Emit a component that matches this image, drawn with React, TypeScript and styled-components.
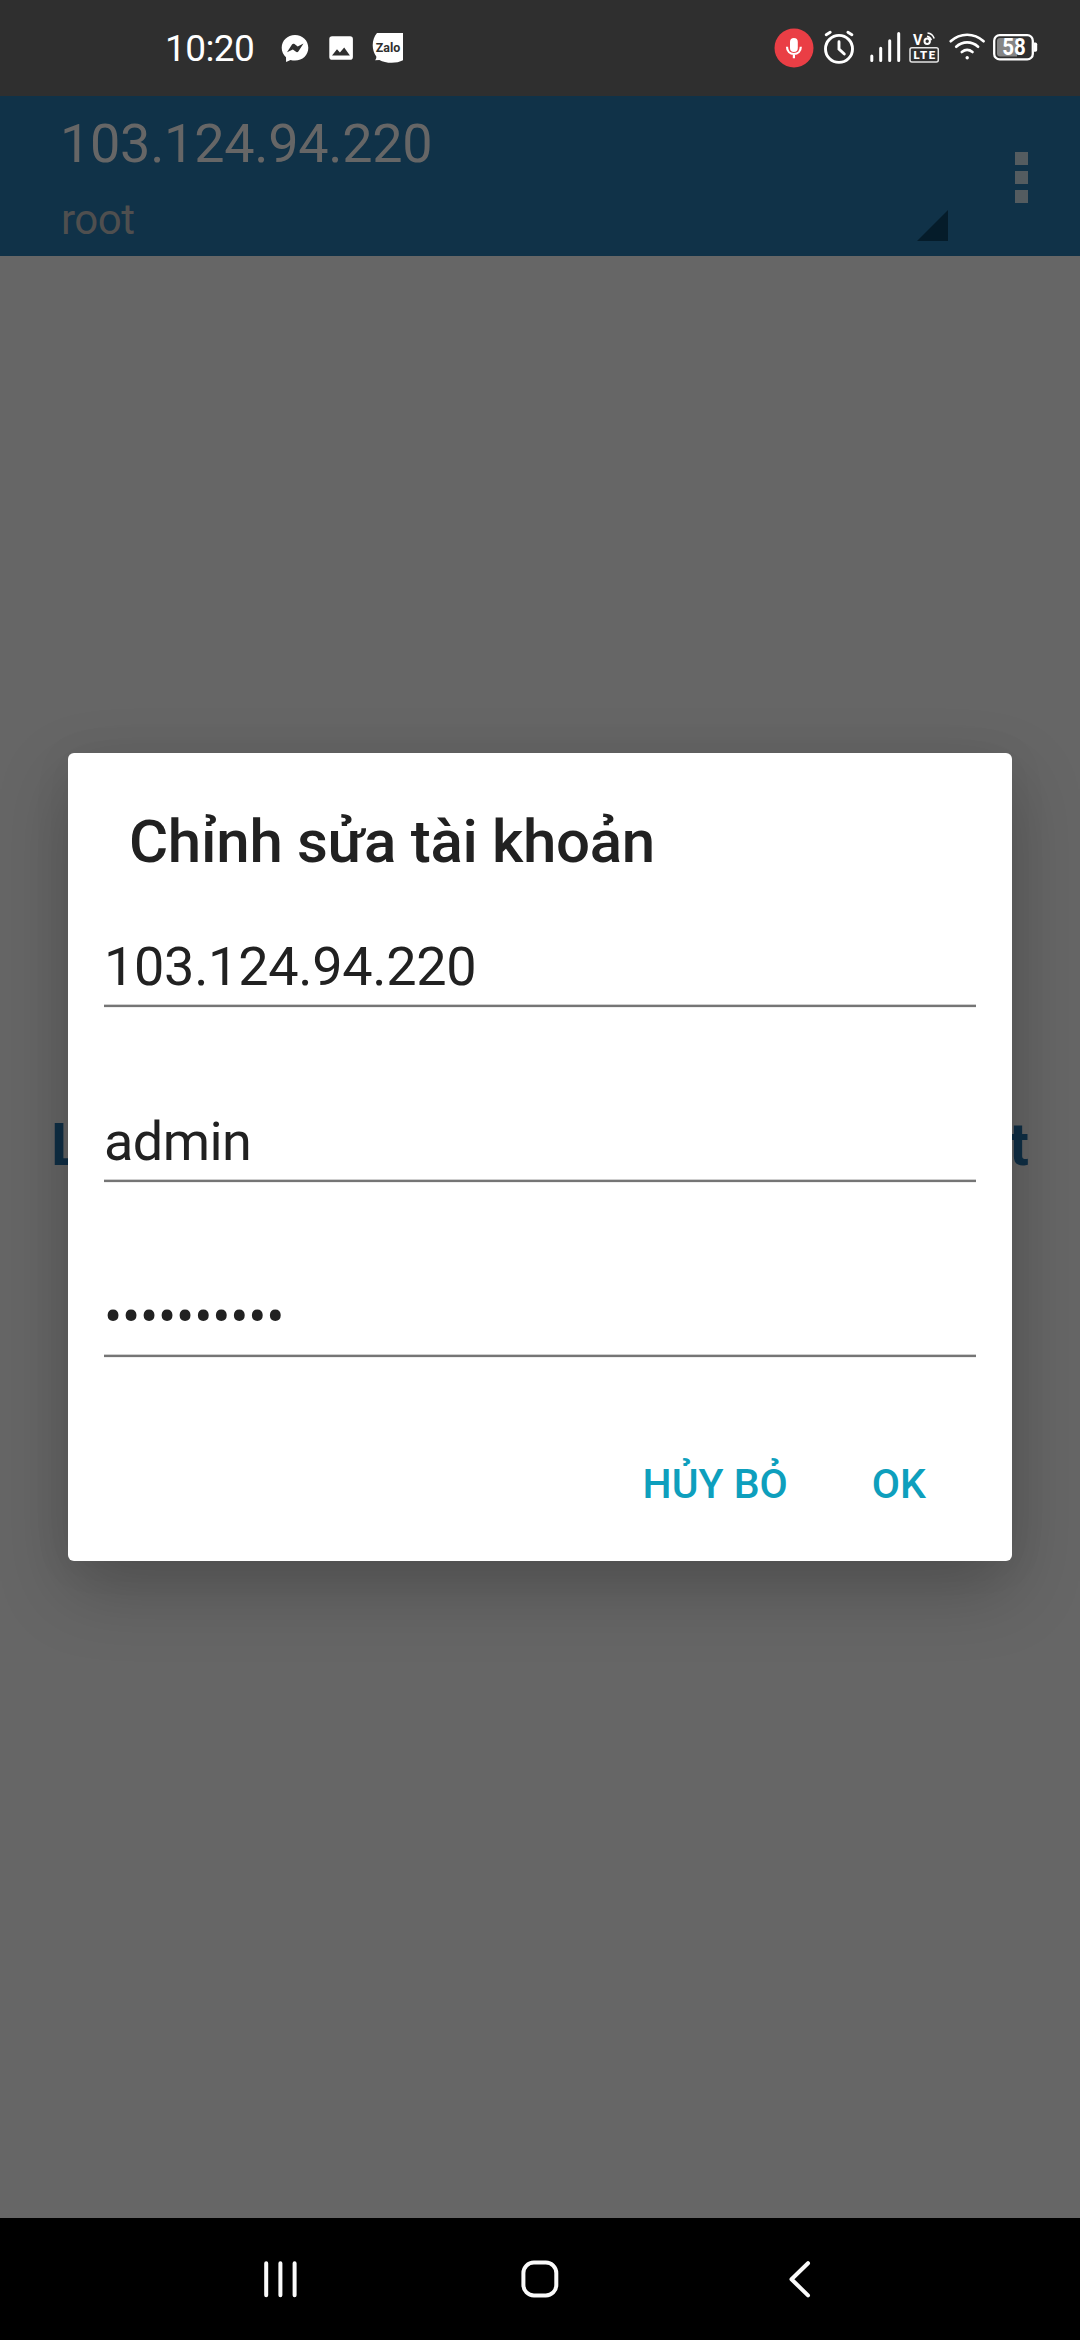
import React from "react";
import styled, { createGlobalStyle } from "styled-components";

const GlobalStyle = createGlobalStyle`
  * { box-sizing: border-box; }
  html, body { margin: 0; padding: 0; background: #666666; }
  body { font-family: Roboto, "Liberation Sans", sans-serif; }
`;

const Screen = styled.div`
  position: relative;
  display: flex;
  flex-direction: column;
  width: 1080px;
  height: 2340px;
  overflow: hidden;
  background: #666666;
`;

const StatusBar = styled.header`
  display: flex;
  justify-content: space-between;
  height: 96px;
  padding: 0 40px 0 165px;
  background: #2f2f2f;
  color: #ffffff;
`;

const StatusGroup = styled.div`
  display: flex;
  align-items: center;
`;

const Clock = styled.time`
  width: 115px;
  font-size: 37px;
  line-height: 44px;
  letter-spacing: -0.6px;
  padding-top: 2px;
`;

const Glyph = styled.svg<{ $gap?: number }>`
  display: block;
  flex: none;
  margin-left: ${(p) => p.$gap ?? 0}px;
`;

const AppBar = styled.div`
  display: flex;
  height: 160px;
  background: #103248;
`;

const AccountPicker = styled.div`
  display: flex;
  align-items: flex-end;
  justify-content: space-between;
  width: 948px;
  padding: 0 0 15px 60px;
`;

const AccountText = styled.div`
  display: flex;
  flex-direction: column;
  align-self: flex-start;
  padding-top: 16px;
`;

const Host = styled.span`
  font-size: 54px;
  line-height: 64px;
  letter-spacing: -0.3px;
  color: #666666;
`;

const User = styled.span`
  margin-top: 19px;
  padding-left: 1px;
  font-size: 42px;
  line-height: 50px;
  letter-spacing: -0.5px;
  color: #4f4f4f;
`;

const Corner = styled.div`
  width: 31px;
  height: 31px;
  background: #051c2a;
  clip-path: polygon(100% 0, 100% 100%, 0 100%);
`;

const Overflow = styled.button`
  display: flex;
  flex-direction: column;
  align-items: center;
  gap: 6px;
  flex: 1;
  padding: 56px 0 0 14px;
  border: 0;
  background: none;
`;

const OverflowDot = styled.i`
  width: 13px;
  height: 13px;
  background: #545c60;
`;

const Content = styled.main`
  display: flex;
  flex: 1;
  align-items: flex-start;
  justify-content: space-between;
  padding: 854px 51px 0 51px;
`;

const Hint = styled.span`
  font-size: 59px;
  font-weight: 700;
  line-height: 70px;
  color: #102f46;
`;

const Dialog = styled.section`
  position: absolute;
  left: 68px;
  top: 753px;
  display: flex;
  flex-direction: column;
  width: 944px;
  height: 808px;
  padding: 0 36px;
  border-radius: 6px;
  background: #ffffff;
  box-shadow: 0 28px 72px rgba(0, 0, 0, 0.22), 0 4px 40px rgba(0, 0, 0, 0.06);
`;

const DialogTitle = styled.h1`
  margin: 54px 0 0 25px;
  font-size: 60px;
  font-weight: 500;
  line-height: 70px;
  letter-spacing: -0.3px;
  color: #212121;
`;

const Fields = styled.div`
  display: flex;
  flex-direction: column;
  gap: 80px;
  margin-top: 36px;
`;

const Field = styled.div<{ $spacing?: number }>`
  display: flex;
  align-items: flex-start;
  height: 95px;
  font-size: 54px;
  line-height: 108px;
  letter-spacing: ${(p) => p.$spacing ?? -0.3}px;
  color: #212121;
  background: linear-gradient(#cfcfcf 0 1px, #757575 1px 3px, #efefef 3px) bottom / 100% 4px no-repeat;
`;

const Actions = styled.footer`
  display: flex;
  justify-content: flex-end;
  gap: 84px;
  margin-top: 101px;
  padding-right: 50px;
`;

const Action = styled.button`
  padding: 0;
  border: 0;
  background: none;
  font: 500 41px/50px Roboto, "Liberation Sans", sans-serif;
  color: #0e9fbd;
`;

const NavBar = styled.nav`
  display: flex;
  align-items: center;
  justify-content: space-between;
  height: 122px;
  padding: 0 260px 0 260px;
  background: #000000;
`;

const MessengerIcon = () => (
  <Glyph width="30" height="30" viewBox="280 33 30 30">
    <path fill="#fff" d="M295 35c-7.600 0-13.300 5.500-13.300 12.800 0 3.900 1.600 7.200 4.300 9.500l.1 4.700 4.400-2c1.400.4 2.900.6 4.500.6 7.600 0 13.300-5.500 13.300-12.800S302.600 35 295 35z" />
    <path fill="#2f2f2f" d="M287 52.200l5-7.700c.6-.9 1.700-1.100 2.500-.5l3.200 2.400 5.800-2.900-5 7.800c-.6.9-1.700 1.100-2.500.5l-3.100-2.400z" />
  </Glyph>
);

const PictureIcon = () => (
  <Glyph $gap={18} width="26" height="26" viewBox="328 35 26 26">
    <rect x="329.300" y="36.300" width="23.600" height="23.400" rx="2.800" fill="#fff" />
    <path fill="#2f2f2f" d="M332 55.500l5-6.200 2.900 3.200 4.300-5 5.700 8z" />
  </Glyph>
);

const ZaloIcon = () => (
  <Glyph $gap={18} width="32" height="32" viewBox="372 31 32 32">
    <path fill="#fff" d="M377 32h26v27.300c-3.200 1.700-7.200 2.500-11.300 2.500-4.800 0-9-1.100-12.300-2.900l-4.400.3c1-1.100 1.500-2.400 1.300-3.800-2.300-3.200-3.600-7-3.600-11.200 0-4.800 1.600-9 4.300-12.200z" />
    <text x="375.700" y="51" fontFamily="Roboto, sans-serif" fontSize="12.500" fontWeight="700" textLength="24.500" lengthAdjust="spacingAndGlyphs" fill="#2f2f2f">Zalo</text>
  </Glyph>
);

const MicIcon = () => (
  <Glyph width="40" height="40" viewBox="774.300 27.300 40 40">
    <circle cx="794.300" cy="47.300" r="19.500" fill="#ea3e45" />
    <rect x="790.300" y="37.300" width="7.800" height="14" rx="3.900" fill="#fff" />
    <path d="M787.300 46c0 4.500 3 7.300 6.900 7.300s6.900-2.800 6.900-7.300M794.200 53v4.500" fill="none" stroke="#fff" strokeWidth="2.200" />
  </Glyph>
);

const AlarmIcon = () => (
  <Glyph $gap={9} width="32" height="36" viewBox="823.300 29.800 32 36">
    <g fill="none" stroke="#fff" strokeWidth="2.900" strokeLinecap="round">
      <circle cx="839.300" cy="48.700" r="13.500" />
      <path d="M839.300 41.500v7.300l5.300 5M826.500 34.600l4-2.500M852.200 34.600l-4-2.500" />
    </g>
  </Glyph>
);

const SignalIcon = () => (
  <Glyph $gap={14} width="34" height="34" viewBox="869 31 34 34">
    <path d="M871.800 56v4.500M880.700 48.300v12.200M889.700 40.800v19.700M898.700 33.500v27" stroke="#fff" strokeWidth="3" strokeLinecap="round" />
  </Glyph>
);

const VolteIcon = () => (
  <Glyph $gap={5} width="32" height="34" viewBox="908 31 32 34">
    <text x="913" y="44.700" fontFamily="Roboto, sans-serif" fontSize="14.500" fontWeight="700" fill="#fff">V</text>
    <circle cx="927.200" cy="41.300" r="2.700" fill="none" stroke="#fff" strokeWidth="2" />
    <path d="M927 36.200a5.500 5.500 0 0 1 4.300 4M927.500 33a8 8 0 0 1 6.700 5.500" fill="none" stroke="#fff" strokeWidth="1.500" />
    <rect x="910" y="47.700" width="28.300" height="14.300" rx="2" fill="none" stroke="#e4e4e4" strokeWidth="1.500" />
    <text x="913.500" y="59" fontFamily="Roboto, sans-serif" fontSize="11.300" fontWeight="900" textLength="21.500" fill="#fff">LTE</text>
  </Glyph>
);

const WifiIcon = () => (
  <Glyph $gap={8} width="38" height="32" viewBox="948 32 38 32">
    <g fill="none" stroke="#fff" strokeWidth="2.700" strokeLinecap="round">
      <path d="M950.700 41.200c9.600-8.600 23.300-8.600 32.900 0" />
      <path d="M956.200 46.700c6.500-5.700 15.400-5.700 21.900 0" />
      <path d="M961.800 52c3.300-2.600 7.400-2.600 10.700 0" />
    </g>
    <circle cx="967.200" cy="57.700" r="1.700" fill="#fff" />
  </Glyph>
);

const BatteryIcon = () => (
  <Glyph $gap={6} width="48" height="30" viewBox="992 33 48 30">
    <rect x="994.200" y="35.200" width="38.600" height="24.200" rx="5.500" fill="none" stroke="#fff" strokeWidth="2.300" />
    <path d="M1034 42.500h1.500q1.700 0 1.700 1.700v5.800q0 1.700-1.700 1.700H1034z" fill="#fff" />
    <path d="M1000 38h17v18.500h-17q-3 0-3-3v-12.500q0-3 3-3z" fill="#858585" />
    <text x="1002.300" y="55.200" fontFamily="Roboto, sans-serif" fontSize="24.500" fontWeight="700" textLength="23.500" lengthAdjust="spacingAndGlyphs" fill="#fff">58</text>
  </Glyph>
);

const RecentsIcon = () => (
  <Glyph width="40" height="40" viewBox="260 2259 40 40">
    <path d="M266.200 2263.300v32M280.400 2263.300v32M294.600 2263.300v32" stroke="#fafafa" strokeWidth="4" strokeLinecap="round" />
  </Glyph>
);

const HomeIcon = () => (
  <Glyph width="40" height="40" viewBox="520 2259 40 40">
    <rect x="523.400" y="2262.600" width="32.900" height="32.900" rx="10.500" fill="none" stroke="#fafafa" strokeWidth="4" />
  </Glyph>
);

const BackIcon = () => (
  <Glyph width="40" height="40" viewBox="780 2259 40 40">
    <path d="M808 2263.200l-16.500 16.100 16.500 16.100" fill="none" stroke="#fafafa" strokeWidth="4" strokeLinecap="round" strokeLinejoin="round" />
  </Glyph>
);

export default function App() {
  return (
    <>
      <GlobalStyle />
      <Screen>
        <StatusBar>
          <StatusGroup>
            <Clock>10:20</Clock>
            <MessengerIcon />
            <PictureIcon />
            <ZaloIcon />
          </StatusGroup>
          <StatusGroup>
            <MicIcon />
            <AlarmIcon />
            <SignalIcon />
            <VolteIcon />
            <WifiIcon />
            <BatteryIcon />
          </StatusGroup>
        </StatusBar>

        <AppBar>
          <AccountPicker>
            <AccountText>
              <Host>103.124.94.220</Host>
              <User>root</User>
            </AccountText>
            <Corner />
          </AccountPicker>
          <Overflow>
            <OverflowDot />
            <OverflowDot />
            <OverflowDot />
          </Overflow>
        </AppBar>

        <Content>
          <Hint>L</Hint>
          <Hint>t</Hint>
        </Content>

        <NavBar>
          <RecentsIcon />
          <HomeIcon />
          <BackIcon />
        </NavBar>

        <Dialog>
          <DialogTitle>Chỉnh sửa tài khoản</DialogTitle>
          <Fields>
            <Field>103.124.94.220</Field>
            <Field $spacing={-0.6}>admin</Field>
            <Field $spacing={-0.19}>••••••••••</Field>
          </Fields>
          <Actions>
            <Action>HỦY BỎ</Action>
            <Action>OK</Action>
          </Actions>
        </Dialog>
      </Screen>
    </>
  );
}
